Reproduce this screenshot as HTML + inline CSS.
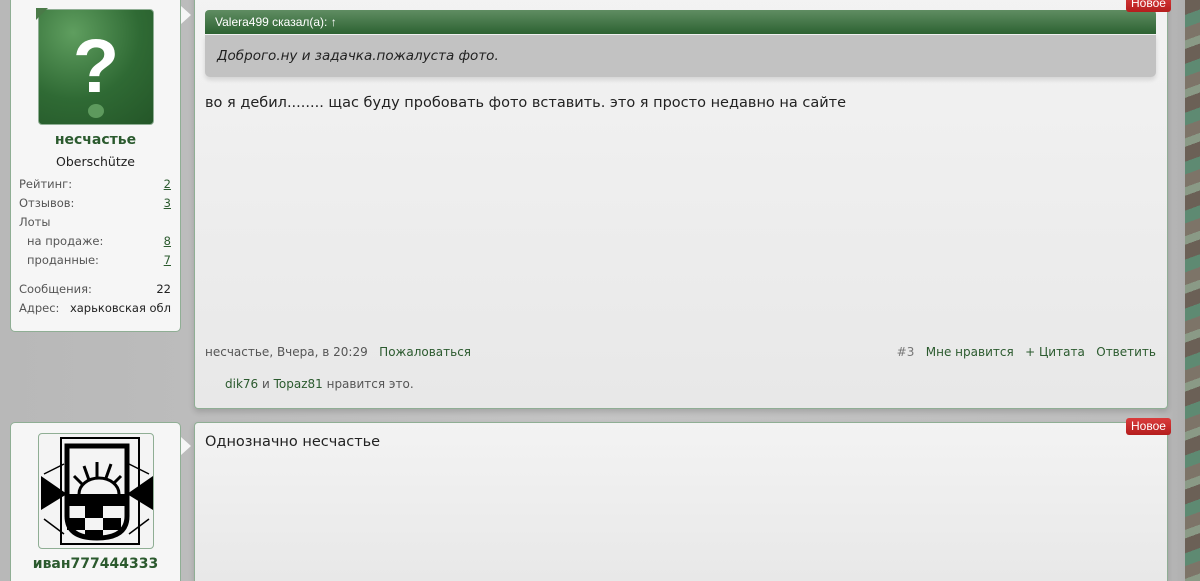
<!DOCTYPE html>
<html><head><meta charset="utf-8"><style>
*{box-sizing:border-box;margin:0;padding:0}
html,body{width:1200px;height:581px;overflow:hidden}
body{background:linear-gradient(90deg,#b8b8b8,#c4c4c4 50%,#bdbdbd 96%,#aaa);font-family:"DejaVu Sans","Liberation Sans",sans-serif;font-size:13px;color:#222;position:relative}
.camo{position:absolute;left:1185px;top:0;width:15px;height:581px;background:repeating-linear-gradient(160deg,#6b6056 0 14px,#5e8a72 14px 26px,#7d7468 26px 38px,#8a9a86 38px 46px)}
.card{position:absolute;left:10px;width:171px;background:#f6f6f6;border:1px solid #8fae94;border-radius:5px}
.post{position:absolute;left:194px;width:974px;background:linear-gradient(#f3f3f3,#e8e8e8);border:1px solid #8fae94;border-radius:4px;box-shadow:0 3px 6px rgba(0,0,0,.15)}
.arrow{position:absolute;left:181px;width:0;height:0;border-top:9px solid transparent;border-bottom:9px solid transparent;border-left:10px solid #f6f6f6}
.av{position:absolute;left:38px;width:116px;height:116px;border:1px solid #8fae94;border-radius:4px}
.name{position:absolute;width:100%;text-align:center;font-weight:bold;color:#2b5a2e;font-size:14px}
.row{position:absolute;left:9px;right:10px;font-size:11.5px;color:#555}
.row span{position:absolute;right:0;color:#2b5a2e;text-decoration:underline}
.g{color:#2b5a2e}
.badge{position:absolute;background:linear-gradient(#d93c3c,#b51d1d);color:#fff;font-size:12px;padding:0 5px;height:17px;line-height:16px;border-radius:3px;font-family:"Liberation Sans",sans-serif}
</style></head><body>
<div class="camo"></div>

<div class="card" style="top:-8px;height:340px"></div>
<div class="arrow" style="top:6px"></div>
<div class="av" style="top:9px;background:radial-gradient(circle at 30% 20%,#5f9e5f,#2f6a34 55%,#245628);"></div>
<div style="position:absolute;left:36px;top:8px;width:0;height:0;border-top:12px solid #4a7a48;border-right:12px solid transparent"></div>
<div style="position:absolute;left:38px;top:32px;width:116px;text-align:center;color:#fff;font-size:76px;font-weight:bold;line-height:70px;font-family:'Liberation Sans',sans-serif">?</div>
<div style="position:absolute;left:88px;top:104px;width:16px;height:14px;border-radius:50%;background:#5d9a5d"></div>
<div class="card" style="top:-8px;height:340px;background:none;border:none">
 <div class="name" style="top:140px">несчастье</div>
 <div style="position:absolute;top:162px;width:100%;text-align:center;font-size:12.5px">Oberschütze</div>
 <div class="row" style="top:185px">Рейтинг:<span>2</span></div>
 <div class="row" style="top:204px">Отзывов:<span>3</span></div>
 <div class="row" style="top:223px">Лоты</div>
 <div class="row" style="top:242px;padding-left:8px">на продаже:<span>8</span></div>
 <div class="row" style="top:261px;padding-left:8px">проданные:<span>7</span></div>
 <div class="row" style="top:290px">Сообщения:<span style="color:#222;text-decoration:none">22</span></div>
 <div class="row" style="top:309px">Адрес:<span style="color:#222;text-decoration:none">харьковская обл</span></div>
</div>

<div class="post" style="top:-10px;height:419px"></div>
<div style="position:absolute;left:205px;top:10px;width:951px;height:24px;background:linear-gradient(#5f8d62,#2d6232);border-radius:4px 4px 0 0;color:#fff;font-size:12px;padding:5px 10px;font-family:'Liberation Sans',sans-serif">Valera499 сказал(а): ↑</div>
<div style="position:absolute;left:205px;top:35px;width:951px;height:42px;background:#c2c2c2;border-radius:0 0 5px 5px;box-shadow:0 3px 5px rgba(0,0,0,.12);font-style:italic;font-size:13.5px;padding:13px 12px">Доброго.ну и задачка.пожалуста фото.</div>
<div style="position:absolute;left:205px;top:95px;font-size:14.5px">во я дебил........ щас буду пробовать фото вставить. это я просто недавно на сайте</div>
<div style="position:absolute;left:205px;top:345px;font-size:12px;color:#555">несчастье, Вчера, в 20:29 &nbsp;&nbsp;<span class="g">Пожаловаться</span></div>
<div style="position:absolute;right:44px;top:345px;font-size:12px;color:#777">#3 &nbsp;&nbsp;<span class="g">Мне нравится</span> &nbsp;&nbsp;<span class="g">+ Цитата</span> &nbsp;&nbsp;<span class="g">Ответить</span></div>
<div style="position:absolute;left:225px;top:377px;font-size:12px;color:#555"><span class="g">dik76</span> и <span class="g">Topaz81</span> нравится это.</div>
<div class="badge" style="left:1126px;top:-5px">Новое</div>

<div class="card" style="top:422px;height:159px;border-bottom:none;border-radius:5px 5px 0 0"></div>
<div class="arrow" style="top:437px"></div>
<div class="av" style="top:433px;background:#f4f4f4;overflow:hidden">
<svg width="116" height="116" viewBox="0 0 116 116"><g stroke="#000" fill="none" stroke-width="3">
<rect x="22" y="4" width="78" height="106" stroke-width="2"/>
<path d="M28 12h60v70q0 22-30 22t-30-22z" stroke-width="5"/>
<path d="M40 60a20 16 0 0 1 40 0"/><path d="M45 32l5 14M58 28v15M72 30l-5 14M35 42l8 8M82 42l-8 8"/>
<path d="M5 40l20-10M110 40l-20-10M5 85l20 15M110 85l-20 15" stroke-width="1.5"/></g>
<path d="M2 42l26 18-26 16z M114 42l-26 18 26 16z" fill="#000"/>
<path d="M28 60h62v12H28z M28 84h18v12H28z M46 72h18v12H46z M64 84h18v12H64z M46 96h18v8H46z" fill="#000"/></svg></div>
<div class="name" style="left:10px;width:171px;top:556px">иван777444333</div>

<div class="post" style="top:422px;height:159px;border-bottom:none;border-radius:4px 4px 0 0"></div>
<div style="position:absolute;left:205px;top:434px;font-size:14.5px">Однозначно несчастье</div>
<div class="badge" style="left:1126px;top:418px">Новое</div>
</body></html>
